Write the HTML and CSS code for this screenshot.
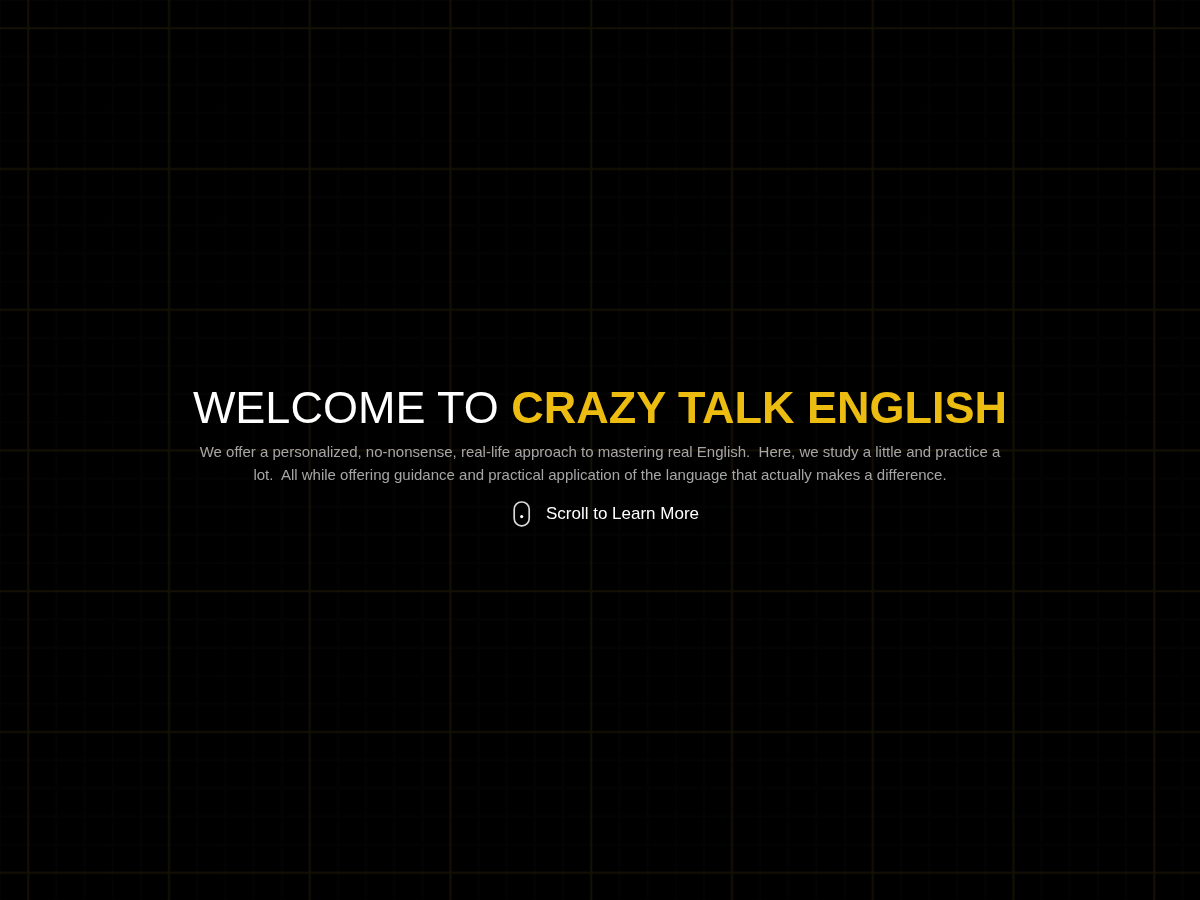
FILE: index.html
```html
<!DOCTYPE html>
<html lang="en">
<head>
<meta charset="utf-8">
<meta name="viewport" content="width=device-width, initial-scale=1">
<title>Crazy Talk English</title>
<link rel="stylesheet" href="styles.css">
</head>
<body>
<svg class="grid" viewBox="0 0 4800 3600" preserveAspectRatio="xMinYMin slice" aria-hidden="true">
  <defs>
    <pattern id="cells" x="56" y="56" width="563" height="563" patternUnits="userSpaceOnUse">
      <path class="grid-minor" d="M169.4 0V563M282 0V563M394.6 0V563M507.2 0V563M0 169.4H563M0 282H563M0 394.6H563M0 507.2H563"/>
      <path class="grid-major" d="M57 0V563M0 57H563"/>
    </pattern>
  </defs>
  <rect width="4800" height="3600" fill="url(#cells)"/>
</svg>
<main class="hero">
  <h1 class="title">Welcome to <strong>Crazy Talk English</strong></h1>
  <p class="intro">We offer a personalized, no-nonsense, real-life approach to mastering real English.&nbsp; Here, we study a little and practice a lot.&nbsp; All while offering guidance and practical application of the language that actually makes a difference.</p>
  <a class="scroll" href="#more">
    <svg class="mouse" viewBox="0 0 18 26" aria-hidden="true">
      <rect x="1.2" y="1" width="15" height="23.8" rx="7.2"/>
      <circle cx="8.7" cy="15.6" r="1.6"/>
    </svg>
    <span>Scroll to Learn More</span>
  </a>
</main>
</body>
</html>
```
FILE: styles.css
```css
* {
  box-sizing: border-box;
}

body {
  margin: 0;
  background: #000;
  color: #fff;
  font-family: "Liberation Sans", Arial, sans-serif;
}

.grid {
  position: fixed;
  inset: 0;
  z-index: -1;
  width: 100%;
  height: 100%;
}

.grid-major,
.grid-minor {
  fill: none;
  stroke-width: 8;
}

.grid-major {
  stroke: #141004;
}

.grid-minor {
  stroke: #030303;
}

.hero {
  display: flex;
  flex-direction: column;
  align-items: center;
  justify-content: center;
  min-height: 100vh;
  padding: 10px 16px 0;
  text-align: center;
}

.title {
  margin: 0 0 6px;
  font-size: 45px;
  font-weight: 400;
  line-height: 52px;
  text-transform: uppercase;
}

.title strong {
  color: #ecbc10;
  font-weight: 700;
}

.intro {
  max-width: 824px;
  margin: 0 0 14px;
  color: #a6a6a6;
  font-size: 15px;
  line-height: 23px;
}

.scroll {
  display: flex;
  align-items: center;
  gap: 15px;
  padding-left: 12px;
  color: #fff;
  font-size: 17px;
  line-height: 28px;
  text-decoration: none;
}

.mouse {
  width: 18px;
  height: 26px;
}

.mouse rect {
  fill: none;
  stroke: #d8d8d8;
  stroke-width: 1.7;
}

.mouse circle {
  fill: #fff;
}
```
